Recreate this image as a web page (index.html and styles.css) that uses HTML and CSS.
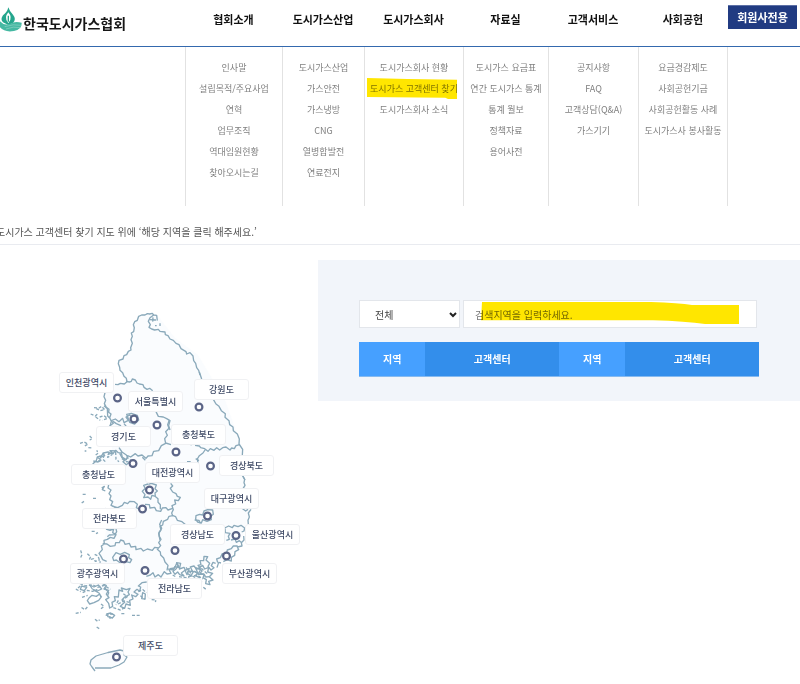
FILE: index.html
```html
<!DOCTYPE html>
<html lang="ko">
<head>
<meta charset="utf-8">
<title>한국도시가스협회</title>
<link rel="stylesheet" href="styles.css">
</head>
<body>
<header class="topbar columns">
  <a class="logo" href="#">
    <svg class="logo-mark" viewBox="0 20 66 75" aria-hidden="true">
      <path fill="#25a68d" d="M25 21Q29 34 39 43Q50 56 39 68L25 74L9 66Q0 57 9 45Q22 35 25 21Z"/>
      <path fill="#fff" d="M25 36Q38 51 27 65L25 69L23 65Q12 51 25 36Z"/>
      <path fill="#25a68d" d="M23 46H27V64H23Z"/>
      <path fill="#45b8a2" d="M0 63Q12 77 30 70Q44 62 65 67Q66 88 42 92Q14 97 0 81Z"/>
      <path fill="none" stroke="#8fd3c5" stroke-width="2" d="M14 79Q40 70 64 75M18 86Q40 77 62 82"/>
    </svg>
    <span>한국도시가스협회</span>
  </a>
  <a class="menu-title" href="#">협회소개</a>
  <a class="menu-title" href="#">도시가스산업</a>
  <a class="menu-title" href="#">도시가스회사</a>
  <a class="menu-title" href="#">자료실</a>
  <a class="menu-title" href="#">고객서비스</a>
  <a class="menu-title" href="#">사회공헌</a>
  <a class="member" href="#">회원사전용</a>
</header>
<nav class="submenu columns">
  <ul class="first">
    <li><a href="#">인사말</a></li><li><a href="#">설립목적/주요사업</a></li><li><a href="#">연혁</a></li><li><a href="#">업무조직</a></li><li><a href="#">역대임원현황</a></li><li><a href="#">찾아오시는길</a></li>
  </ul>
  <ul>
    <li><a href="#">도시가스산업</a></li><li><a href="#">가스안전</a></li><li><a href="#">가스냉방</a></li><li><a href="#">CNG</a></li><li><a href="#">열병합발전</a></li><li><a href="#">연료전지</a></li>
  </ul>
  <ul>
    <li><a href="#">도시가스회사 현황</a></li><li class="marked"><a href="#">도시가스 고객센터 찾기</a></li><li><a href="#">도시가스회사 소식</a></li>
  </ul>
  <ul>
    <li><a href="#">도시가스 요금표</a></li><li><a href="#">연간 도시가스 통계</a></li><li><a href="#">통계 월보</a></li><li><a href="#">정책자료</a></li><li><a href="#">용어사전</a></li>
  </ul>
  <ul>
    <li><a href="#">공지사항</a></li><li><a href="#">FAQ</a></li><li><a href="#">고객상담(Q&amp;A)</a></li><li><a href="#">가스기기</a></li>
  </ul>
  <ul class="last">
    <li><a href="#">요금경감제도</a></li><li><a href="#">사회공헌기금</a></li><li><a href="#">사회공헌활동 사례</a></li><li><a href="#">도시가스사 봉사활동</a></li>
  </ul>
</nav>
<p class="guide">도시가스 고객센터 찾기 지도 위에 ‘해당 지역을 클릭 해주세요.’</p>
<main class="content">
  <section class="map" aria-label="지역 지도">
    <svg class="map-art" viewBox="0 245 318 439" aria-hidden="true">
      <path class="land" d="M157 315L140 315L133 325L132 345L119 362L121 374L127 383L105 386L104 405L111 417L112 452L92 464L111 490L112 505L104 540L100 555L92 580L108 600L118 606L150 590L170 570L200 565L228 560L243 535L250 508L244 480L243 450L225 400L198 355L175 338Z"/>
      <path class="land" d="M95 670L90 666L91 660L108 652L125 651L126 658L110 668Z"/>
      <!-- northern coast -->
      <g transform="translate(50 300) scale(.33333)">
        <path d="M322 62L320 46L311 45L307 40L299 42L292 41L285 45L275 45L266 49L262 61L254 65L250 74L253 83L251 95L244 99L247 109L243 119L247 130L242 143L243 150L235 154L230 164L222 167L219 177L207 181L205 191L209 202L210 211L218 218L222 229L229 235L231 245L223 252L211 250L204 254L195 253"/>
        <path d="M229 244L238 246L244 244L247 237L256 240L261 249L268 252L279 254L282 262L291 268L299 265L308 272"/>
        <path d="M311 45L300 53L295 64L301 74L297 82L305 87L314 90L325 88L330 94L345 96L346 104L354 107L360 117L370 121L378 130L387 134L393 146L408 155L410 162L420 158L429 168L431 182L437 190L440 203L446 211L450 225"/>
        <path d="M299 59L318 60M309 52L308 65M330 70V78M315 77H320"/>
        <path d="M165 278L162 290L167 301L163 311L169 322L177 328L176 337L183 342L179 353L184 364L179 382M162 317L172 326L173 348L181 356"/>
        <path class="islets" d="M122 342L136 348L145 340M132 323L147 324L155 319L164 329L151 332L139 326M149 351L162 347L172 355L157 361M137 351L151 361"/>
        <path d="M179 378L190 370L184 362L196 357L207 365L218 355L222 368L235 361L228 351L239 345L248 353M230 343L244 340L262 346L266 360L254 372L239 367Z"/>
        <path d="M318 335L325 349L340 351L350 356L360 362L356 377L360 390M189 364L199 371L211 376L215 386M222 371L232 383"/>
      </g>
      <!-- eastern coast -->
      <g transform="translate(170 300) scale(.33333)">
        <path d="M88 216L95 237M130 298L138 312L147 319L154 332L166 341L165 352L177 362L179 374L189 381L190 392L202 402L208 417L207 432L218 448L217 466M218 527L225 540"/>
        <path d="M209 434L198 437L193 446L185 444L180 450L168 441L158 443L149 450L140 443L132 451L121 446L114 454L104 446L92 443L88 438L75 436M61 434H66M107 447L99 459L88 467L82 477L84 489M51 485H62"/>
      </g>
      <!-- inland boundaries and western coast -->
      <g transform="translate(50 420) scale(.33333)">
        <path d="M358 0L353 14L357 25L347 35L352 46L344 56L347 70L334 77L326 92L311 94L306 107L294 108L288 115L276 105L264 108L256 101L242 111L233 107L229 119L217 112L214 99L205 98L197 91L188 102L174 96L161 99L154 108L142 111L139 122L128 132M347 69L363 74M207 83L216 96L229 105L235 116M277 112L286 121"/>
        <path class="islets" d="M90 70L102 66L114 72L104 78M119 48L127 56L119 60M115 83L127 84M137 105L145 99L140 91M149 107L155 118L145 128M162 105L159 118L168 127M177 95L173 112L186 104M197 96L198 118L207 125M216 116L231 126L244 119M104 93H109"/>
        <path d="M209 100L216 113L226 120L219 125L229 134L238 127M130 123L144 126L151 117L141 112M158 98L164 107L150 112M173 104L187 98L180 92L199 93"/>
        <path d="M155 204L163 199L157 209L166 213M176 194L174 204L183 210L177 221L183 228L179 239L188 245L183 256L193 260L198 268M185 258L203 263L217 256L223 247L233 251L239 244L253 245L262 253L259 263L269 268"/>
        <path d="M285 253L298 254L300 264L314 262L319 272L332 274L337 264L348 263L354 270L368 265M294 192L281 196L286 205L277 214L285 224L281 233L294 231L302 238L306 226L316 229L315 219L322 213L315 206L319 195L304 190L295 193M315 229L324 236L324 247L331 254L331 268M362 190L368 198L361 205L368 216L378 221L382 229L391 232L385 242L374 240L377 252L366 257L370 269L365 279L368 287L357 289L353 298L340 304L338 315L330 319L333 330L326 341L330 360M369 287L377 290L382 301L396 305L407 314M437 116L447 122M434 300L447 301L451 310"/>
        <path class="islets" d="M152 270L163 264L172 271M129 235H142M98 223H111M95 249L102 244M125 334H138M105 282L113 277"/>
        <path d="M173 325L184 328L197 323L200 335L195 344L178 345L172 350"/>
      </g>
      <!-- south-east -->
      <g transform="translate(170 460) scale(.33333)">
        <path d="M218 48L224 58L222 68L225 76L219 86M243 148L235 159L238 171L234 181L235 193M216 145L227 153L234 148"/>
        <path d="M94 189L83 186L77 178L78 167L89 163L98 165L102 153L113 149L128 150L130 163L122 169L124 179L111 184L98 179Z"/>
        <path d="M164 204L176 198L187 203L192 196L204 200L213 196L224 204L222 213L215 216M165 206L166 218L180 220L175 229L178 238L169 241M183 240L195 237L199 247L208 242L216 249M221 228L222 240L214 248L216 258L202 261L206 269L195 275L194 286L184 292L184 303L171 299L160 305M203 258L190 258L184 266L172 270L169 282L157 281L151 293L140 297L143 308"/>
        <path d="M153 309L146 307L141 323M137 310L129 307L124 317L132 323L123 330L114 319L119 310L108 300L113 290L102 289L101 302L90 302L93 314L84 316L91 324L79 327L72 318L61 321L68 335L55 333L51 344L45 331L34 339L42 348L29 344L23 336L15 343L9 334L18 327L25 316L20 310L14 324L0 326"/>
        <path d="M87 323L98 316L104 327L116 322L113 336L128 340L118 350L129 360L116 364L120 374L107 371L109 359L99 353L103 343L90 340L96 333ZM73 333L82 340L76 347L89 353L84 361L96 367"/>
        <path class="islets" d="M27 350L46 353L64 347L79 354M48 322L58 334L66 344M94 325L110 340L101 349M100 382L108 388M54 353L67 359M8 345L20 352"/>
      </g>
      <!-- south-west -->
      <g transform="translate(50 520) scale(.33333)">
        <path d="M168 27L180 31L191 27L188 38L198 44L192 55L181 52L172 58L162 61L163 72L154 78L157 89L147 100L153 109L158 119L170 124M158 71L171 72L181 79L195 77L197 68L208 68L212 60L221 63L225 73L238 70L243 81L257 79L258 89L273 85L280 93L292 87L307 91L314 82L326 84M335 0L329 13L335 25L327 37L328 49L333 58L326 68L332 77L322 88L331 96L332 105L341 114L345 126L354 136L351 151"/>
        <path d="M188 112L198 98L211 103L224 97L238 104L236 113L245 119L240 128L225 124L212 130L199 120L191 122Z"/>
        <path d="M157 190L169 197L162 207L176 211L169 222L177 233L167 239L176 250L179 264L188 259L186 247L196 242L193 230L205 231L207 210L218 214L214 204L229 209L240 205L234 216L238 224L224 231L216 240L224 247L211 259L224 265L228 252L241 256L239 241L249 237L245 225L257 230L264 223L252 216L261 208L269 214L272 201L265 198L276 188L290 186"/>
        <path d="M117 234L126 226L139 229L149 222L153 232L146 241L132 248L119 252L112 242ZM95 198L110 202L103 212L91 208ZM119 195L132 201L145 195L155 207L142 213L127 207ZM130 210L147 219L155 232M164 203L176 218L172 229M278 218L286 222L285 237L275 236ZM170 282L182 279L194 286L187 294L174 290Z"/>
        <path d="M289 169L301 165L309 158L315 171L325 164L333 171L343 155L351 162L363 160L356 147L370 150L374 140L386 142L380 128L392 130L388 147L402 142L406 151L418 145L412 160L423 167L431 154L443 159L437 143L451 149L444 164L461 162L467 171L480 170"/>
        <path class="islets" d="M92 91L96 104L91 115M112 101L122 110L118 119L131 116L136 124L149 120M134 103L144 108L151 128M91 198L79 208L92 215M90 191L108 198L127 194L143 202L162 196L181 208M98 218L112 211L128 214L142 208M96 232L113 226M112 261L105 269L94 262M77 280L93 277M153 252L162 259L153 266M204 252L222 243L241 248M190 263L211 270L228 261M220 221L232 230L219 238M214 281H223M233 264L245 269M246 286H271M135 298L143 304L149 299M167 286L192 281M179 288L181 300M140 321L148 326M265 215L279 209L289 218M305 239L318 240L316 246M271 227L286 238M418 169L442 166L459 177M138 41L144 38M205 241L198 255"/>
      </g>
      <path d="M95 671L92 667L90 664L91 660L96 656L108 652.5L120 650L124 651L124 655L127 657L124 662L119 665L111 668L101 668L95 668"/>
      <g class="markers">
        <circle cx="117.5" cy="398" r="3.4"/><circle cx="134" cy="419" r="3.4"/><circle cx="157" cy="425" r="3.4"/><circle cx="199" cy="407" r="3.4"/>
        <circle cx="176" cy="452" r="3.4"/><circle cx="133" cy="463.5" r="3.4"/><circle cx="210.5" cy="466" r="3.4"/><circle cx="149.5" cy="490" r="3.4"/>
        <circle cx="142.5" cy="509" r="3.4"/><circle cx="207.5" cy="516" r="3.4"/><circle cx="236" cy="535.5" r="3.4"/><circle cx="226.5" cy="556" r="3.4"/>
        <circle cx="175" cy="550.5" r="3.4"/><circle cx="123.5" cy="559" r="3.4"/><circle cx="145" cy="570.5" r="3.4"/><circle cx="116.5" cy="657" r="3.4"/>
      </g>
    </svg>
    <button class="region incheon">인천광역시</button>
    <button class="region seoul">서울특별시</button>
    <button class="region gangwon">강원도</button>
    <button class="region gyeonggi">경기도</button>
    <button class="region chungbuk">충청북도</button>
    <button class="region chungnam">충청남도</button>
    <button class="region daejeon">대전광역시</button>
    <button class="region gyeongbuk">경상북도</button>
    <button class="region jeonbuk">전라북도</button>
    <button class="region daegu">대구광역시</button>
    <button class="region gyeongnam">경상남도</button>
    <button class="region ulsan">울산광역시</button>
    <button class="region busan">부산광역시</button>
    <button class="region gwangju">광주광역시</button>
    <button class="region jeonnam">전라남도</button>
    <button class="region jeju">제주도</button>
  </section>
  <section class="panel">
    <form class="search">
      <div class="select-box">
        <select aria-label="지역 선택"><option>전체</option></select>
        <svg class="chevron" viewBox="0 0 8 6" aria-hidden="true"><path d="M1 1L4 4L7 1"/></svg>
      </div>
      <div class="input-box">
        <input type="text" aria-label="검색지역" placeholder="검색지역을 입력하세요.">
        <svg class="highlight" viewBox="0 0 258 24" preserveAspectRatio="none" aria-hidden="true"><path d="M1 0H170Q198 1 211 3H258V23H224Q205 20 172 19H0Z"/></svg>
      </div>
    </form>
    <table class="centers">
      <thead><tr><th class="area">지역</th><th>고객센터</th><th class="area">지역</th><th>고객센터</th></tr></thead>
    </table>
  </section>
</main>
</body>
</html>
```
FILE: styles.css
```css
* { box-sizing: border-box; }

body {
  margin: 0;
  background: #fff;
  color: #555;
  font-family: "Noto Sans CJK KR", sans-serif;
  font-size: 10px;
  overflow-x: hidden;
}

a { color: inherit; text-decoration: none; }

button, input, select { font: inherit; }

.columns {
  display: grid;
  grid-template-columns: 185fr 97fr 82fr 99fr 85fr 90fr 90fr 72fr;
}

.topbar {
  height: 47px;
  border-bottom: 1px solid #3469ae;
}

.logo {
  display: flex;
  align-items: center;
  gap: 1px;
  height: 38px;
  color: #161616;
  font-size: 14px;
  font-weight: 700;
  line-height: 20px;
  white-space: nowrap;
}

.logo-mark { width: 22px; height: 25px; }

.logo span { padding-top: 8px; }

.menu-title {
  color: #111;
  font-size: 11px;
  font-weight: 700;
  line-height: 38px;
  text-align: center;
  white-space: nowrap;
}

.member {
  width: 69px;
  height: 24px;
  margin-top: 5px;
  background: #213b82;
  border-top: 1px solid #5d70a6;
  color: #fff;
  font-size: 11px;
  font-weight: 700;
  line-height: 22px;
  text-align: center;
  white-space: nowrap;
}

.submenu { height: 159px; }

.submenu ul {
  margin: 0;
  padding: 10px 0 0;
  border-left: 1px solid #e2e2e2;
  color: #808080;
  font-size: 9px;
  line-height: 21px;
  list-style: none;
  text-align: center;
  white-space: nowrap;
}

.submenu .first { grid-column: 2; }

.submenu .last { border-right: 1px solid #e2e2e2; }

.marked { position: relative; }

.marked::after {
  content: "";
  position: absolute;
  inset: 0 6px 0 2px;
  background: #ffe600;
  clip-path: polygon(0 0, 45% 5%, 100% 8%, 100% 100%, 90% 100%, 87% 94%, 0 91%);
  mix-blend-mode: multiply;
  pointer-events: none;
}

.guide {
  margin: 14px 0 0;
  border-bottom: 1px solid #e9ebf0;
  line-height: 24px;
  text-indent: -4px;
  white-space: nowrap;
}

.content {
  display: grid;
  grid-template-columns: 318px 1fr;
  align-items: start;
}

.map { position: relative; }

.map-art {
  display: block;
  width: 100%;
  fill: none;
  stroke: #8aa9ba;
  stroke-width: 1.3;
  stroke-linejoin: round;
}

.map-art g { stroke-width: 4; }

.map-art .land { fill: #fafcfe; stroke: none; }

.map-art .islets { stroke-dasharray: 9 5; }

.map-art .markers { fill: #fff; stroke: #5b6587; stroke-width: 2.2; }

.region {
  position: absolute;
  width: 55px;
  height: 21px;
  padding: 0;
  background: #fff;
  border: 1px solid #f0f1f3;
  border-radius: 3px;
  color: #3f4a66;
  font-size: 9px;
  font-weight: 500;
  line-height: 19px;
  text-align: center;
  white-space: nowrap;
}

.incheon { left: 59px; top: 127px; }
.seoul { left: 128px; top: 146px; }
.gangwon { left: 194px; top: 134px; }
.gyeonggi { left: 96px; top: 181px; }
.chungbuk { left: 171px; top: 179px; }
.chungnam { left: 71px; top: 219px; }
.daejeon { left: 145px; top: 217px; }
.gyeongbuk { left: 219px; top: 210px; }
.jeonbuk { left: 82px; top: 263px; }
.daegu { left: 204px; top: 243px; }
.gyeongnam { left: 170px; top: 279px; }
.ulsan { left: 245px; top: 279px; }
.busan { left: 222px; top: 318px; }
.gwangju { left: 70px; top: 318px; }
.jeonnam { left: 147px; top: 333px; }
.jeju { left: 123px; top: 390px; }

.panel {
  margin-top: 15px;
  padding: 40px 41px 24px;
  background: #f2f5fa;
}

.search {
  display: flex;
  gap: 3px;
  margin: 0 2px 14px 0;
}

.select-box { position: relative; flex: 0 0 101px; }

.input-box { position: relative; flex: 1; }

.search select, .search input {
  display: block;
  width: 100%;
  height: 28px;
  background: #fff;
  border: 1px solid #e3e6eb;
  border-radius: 0;
  color: #444;
}

.search select { padding: 0 15px; appearance: none; }

.search input { padding: 0 11px; }

.search input::placeholder { color: #757575; opacity: 1; }

.chevron {
  position: absolute;
  right: 3px;
  top: 12px;
  width: 8px;
  height: 6px;
  fill: none;
  stroke: #222;
  stroke-width: 2;
  pointer-events: none;
}

.highlight {
  position: absolute;
  left: 18px;
  top: 2px;
  width: calc(100% - 36px);
  height: 23px;
  fill: #ffe600;
  mix-blend-mode: multiply;
  pointer-events: none;
}

.centers {
  width: 100%;
  border-collapse: collapse;
  table-layout: fixed;
}

.centers th {
  height: 34px;
  padding: 0;
  background: #338eeb;
  border-bottom: 1px solid #86baf0;
  color: #fff;
  font-weight: 700;
}

.centers .area { width: 16.6%; background: #46a0ff; }
```
